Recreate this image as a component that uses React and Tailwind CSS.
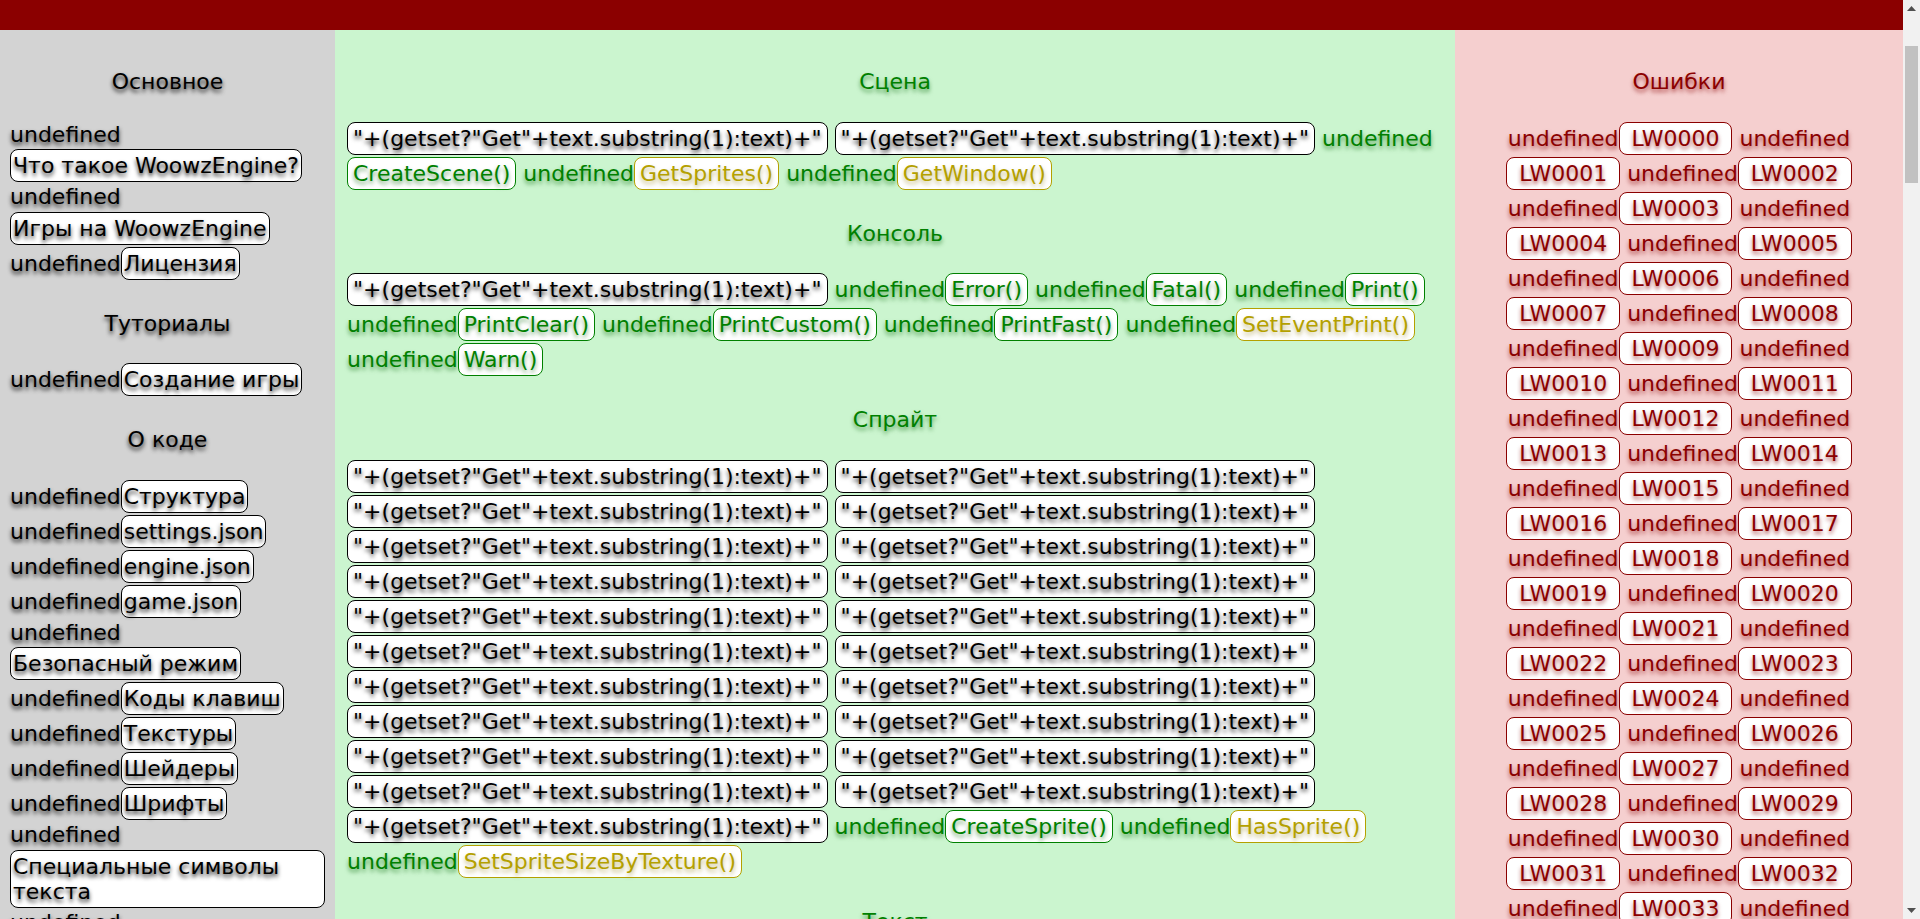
import React from "react";

const BTN_BASE = "inline-block my-[1px] py-[3px] border rounded-[8px] bg-white leading-[normal]";

const VARIANTS = {
  left: "px-[2px] border-black text-black",
  black: "px-[5px] border-black text-black [text-shadow:0_3px_4px_rgba(0,0,0,0.8)]",
  green: "px-[5px] border-[#008000] text-[#008000]",
  olive: "px-[5px] border-[#b4a000] text-[#b4a000] [text-shadow:0_3px_4px_rgba(140,120,0,0.5)]",
  red: "px-[12px] border-[#8b0000] text-[#8b0000]",
};

function Btn({ v, children }) {
  return <span className={BTN_BASE + " " + VARIANTS[v]}>{children}</span>;
}

function Heading({ children }) {
  return <div className="text-center mt-[29px] mb-[25px]">{children}</div>;
}

const BLACK = '"+(getset?"Get"+text.substring(1):text)+"';

function LeftEntry({ label }) {
  return (
    <div>
      undefined
      {label ? <Btn v="left">{label}</Btn> : null}
    </div>
  );
}

function MidItems({ items }) {
  return (
    <div>
      {items.map((it, i) => (
        <React.Fragment key={i}>
          {it.t === "b" ? (
            <Btn v="black">{BLACK}</Btn>
          ) : (
            <>
              undefined
              <Btn v={it.t === "o" ? "olive" : "green"}>{it.l}</Btn>
            </>
          )}{" "}
        </React.Fragment>
      ))}
    </div>
  );
}

const B = { t: "b" };
const g = (l) => ({ t: "g", l });
const o = (l) => ({ t: "o", l });

const scene = [B, B, g("CreateScene()"), o("GetSprites()"), o("GetWindow()")];
const consoleItems = [
  B,
  g("Error()"),
  g("Fatal()"),
  g("Print()"),
  g("PrintClear()"),
  g("PrintCustom()"),
  g("PrintFast()"),
  o("SetEventPrint()"),
  g("Warn()"),
];
const sprite = [
  ...Array.from({ length: 21 }, () => B),
  g("CreateSprite()"),
  o("HasSprite()"),
  o("SetSpriteSizeByTexture()"),
];

const codes = Array.from({ length: 51 }, (_, i) => "LW" + String(i).padStart(4, "0"));

function FakeScrollbar() {
  return (
    <div className="fixed top-0 right-0 w-[17px] h-screen bg-[#f1f1f1] flex flex-col items-center">
      <div className="h-[17px] w-full flex items-center justify-center">
        <svg width="9" height="5" viewBox="0 0 9 5">
          <path d="M0 5 L4.5 0 L9 5 Z" fill="#505050" />
        </svg>
      </div>
      <div className="mt-[29px] w-[13px] h-[137px] bg-[#c1c1c1]" />
      <div className="flex-1" />
      <div className="h-[17px] w-full flex items-center justify-center">
        <svg width="9" height="5" viewBox="0 0 9 5">
          <path d="M0 0 L4.5 5 L9 0 Z" fill="#505050" />
        </svg>
      </div>
    </div>
  );
}

export default function App() {
  return (
    <div className="w-[1903px] min-h-screen flex flex-col font-['DejaVu_Sans',Verdana,sans-serif] text-[22px] leading-[27.5px]">
      <div className="h-[30px] shrink-0 bg-[#8b0000]" />
      <div className="flex flex-1">
        <div className="w-[335px] shrink-0 bg-[#d3d3d3] px-[10px] pt-[9px] text-black [text-shadow:0_3px_4px_rgba(0,0,0,0.85)]">
          <Heading>Основное</Heading>
          <LeftEntry label="Что такое WoowzEngine?" />
          <LeftEntry label="Игры на WoowzEngine" />
          <LeftEntry label="Лицензия" />
          <Heading>Туториалы</Heading>
          <LeftEntry label="Создание игры" />
          <Heading>О коде</Heading>
          <LeftEntry label="Структура" />
          <LeftEntry label="settings.json" />
          <LeftEntry label="engine.json" />
          <LeftEntry label="game.json" />
          <LeftEntry label="Безопасный режим" />
          <LeftEntry label="Коды клавиш" />
          <LeftEntry label="Текстуры" />
          <LeftEntry label="Шейдеры" />
          <LeftEntry label="Шрифты" />
          <LeftEntry label="Специальные символы текста" />
          <LeftEntry />
        </div>
        <div className="w-[1120px] shrink-0 bg-[#cbf5cf] px-[12px] pt-[9px] text-[#008000] [text-shadow:0_3px_4px_rgba(0,100,0,0.6)]">
          <Heading>Сцена</Heading>
          <MidItems items={scene} />
          <Heading>Консоль</Heading>
          <MidItems items={consoleItems} />
          <Heading>Спрайт</Heading>
          <MidItems items={sprite} />
          <Heading>Текст</Heading>
        </div>
        <div className="flex-1 bg-[#f5cfcf] px-[10px] pt-[9px] text-center text-[#8b0000] [text-shadow:0_3px_4px_rgba(139,0,0,0.65)]">
          <Heading>Ошибки</Heading>
          <div>
            {codes.map((c) => (
              <React.Fragment key={c}>
                undefined
                <Btn v="red">{c}</Btn>{" "}
              </React.Fragment>
            ))}
          </div>
        </div>
      </div>
      <FakeScrollbar />
    </div>
  );
}
